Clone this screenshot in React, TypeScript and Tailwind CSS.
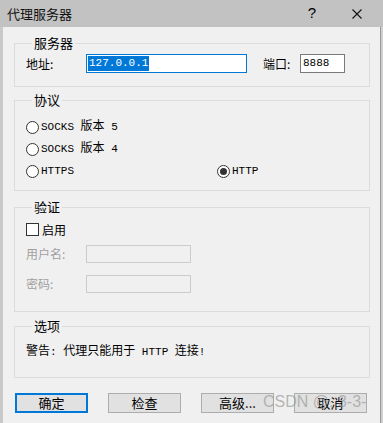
import React from "react";

const cjk = "font-['Noto_Sans_CJK_SC',sans-serif]";
const monoStack = "font-['Liberation_Mono','Noto_Sans_CJK_SC',monospace]";
const latin = "text-[11px]";

function Group({
  title,
  className,
  children,
}: {
  title: string;
  className: string;
  children: React.ReactNode;
}) {
  return (
    <fieldset
      className={`mx-[11px] mr-[10px] border border-[#dcdcdc] px-[11px] ${className}`}
    >
      <legend className="ml-[6px] px-[2px] text-[13px] leading-[14px] text-black">
        {title}
      </legend>
      {children}
    </fieldset>
  );
}

function Radio({ label, checked }: { label: React.ReactNode; checked?: boolean }) {
  return (
    <div className="flex h-[14px] items-center gap-[2px]">
      <span className="flex h-[13px] w-[13px] items-center justify-center rounded-full border border-[#333] bg-white">
        {checked && <span className="h-[7px] w-[7px] rounded-full bg-[#333]" />}
      </span>
      <span className={`${monoStack} whitespace-pre text-[12px] leading-[14px] text-black`}>{label}</span>
    </div>
  );
}

function Btn({ label, primary }: { label: string; primary?: boolean }) {
  return (
    <div
      className={`flex h-[20px] w-[73px] items-center justify-center bg-[#e1e1e1] text-[13px] text-black ${
        primary ? "border-2 border-[#0078d7]" : "border border-[#adadad]"
      }`}
    >
      {label}
    </div>
  );
}

export default function App() {
  return (
    <div className={`relative flex h-[423px] w-[383px] flex-col overflow-hidden bg-[#f0f0f0] ${cjk}`}>
      {/* title bar */}
      <div className="flex h-[27px] shrink-0 items-center bg-[#c2c2c2] pl-[7px] pr-[21px]">
        <span className="text-[13px] text-[#111]">代理服务器</span>
        <span className="ml-auto mr-[36px] font-['Liberation_Sans'] text-[15px] text-black">?</span>
        <svg width="10" height="10" viewBox="0 0 10 10">
          <path d="M0.5 0.5 L9.5 9.5 M9.5 0.5 L0.5 9.5" stroke="#111" strokeWidth="1.1" />
        </svg>
      </div>

      <div className="flex flex-1">
        <div className="w-[3px] bg-[#c9c9c9]" />
        <div className="flex flex-1 flex-col">
          {/* 服务器 */}
          <Group title="服务器" className="mt-[9px] h-[51px]">
            <div className="mt-[4px] flex h-[19px] items-center text-[12px]">
              <span className="w-[60px]">地址:</span>
              <div className="flex h-[19px] w-[161px] items-center border border-[#0078d7] bg-white pl-[1px]">
                <span className={`${monoStack} ${latin} bg-[#0078d7] px-[1px] leading-[15px] text-white`}>127.0.0.1</span>
              </div>
              <span className="ml-[16px] w-[37px]">端口:</span>
              <div className="flex h-[19px] w-[45px] items-center border border-[#7a7a7a] bg-white pl-[2px]">
                <span className={`${monoStack} ${latin} text-black`}>8888</span>
              </div>
            </div>
          </Group>

          {/* 协议 */}
          <Group title="协议" className="mt-[6px] h-[98px]">
            <div className="mt-[13px] grid grid-cols-[191px_1fr] gap-y-[8px]">
              <div className="col-span-2">
                <Radio label={<><span className={latin}>SOCKS </span>版本<span className={latin}> 5</span></>} />
              </div>
              <div className="col-span-2">
                <Radio label={<><span className={latin}>SOCKS </span>版本<span className={latin}> 4</span></>} />
              </div>
              <Radio label={<span className={latin}>HTTPS</span>} />
              <Radio label={<span className={latin}>HTTP</span>} checked />
            </div>
          </Group>

          {/* 验证 */}
          <Group title="验证" className="mt-[9px] h-[112px]">
            <div className="mt-[9px] flex h-[13px] items-center gap-[3px]">
              <span className="h-[13px] w-[13px] border border-[#333] bg-white" />
              <span className="text-[12px] text-black">启用</span>
            </div>
            <div className="mt-[9px] flex h-[18px] items-center text-[12px] text-[#a0a0a0]">
              <span className="w-[60px]">用户名:</span>
              <div className="h-[18px] w-[105px] border border-[#cccccc] bg-[#f0f0f0]" />
            </div>
            <div className="mt-[12px] flex h-[18px] items-center text-[12px] text-[#a0a0a0]">
              <span className="w-[60px]">密码:</span>
              <div className="h-[18px] w-[105px] border border-[#cccccc] bg-[#f0f0f0]" />
            </div>
          </Group>

          {/* 选项 */}
          <Group title="选项" className="mt-[7px] h-[59px]">
            <div className={`${monoStack} mt-[11px] whitespace-pre text-[12px] leading-[16px] text-black`}>
              警告<span className={latin}>: </span>代理只能用于<span className={latin}> HTTP </span>连接<span className={latin}>!</span>
            </div>
          </Group>

          <div className="mt-[15px] flex gap-[20px] pl-[12px]">
            <Btn label="确定" primary />
            <Btn label="检查" />
            <Btn label="高级..." />
            <Btn label="取消" />
          </div>
        </div>
        <div className="w-[3px] border-l border-[#9a9a9a] bg-[#d0d0d0]" />
      </div>

      {/* watermark */}
      <span className="absolute left-[263px] top-[390px] font-['Liberation_Sans'] text-[16px] text-[#9a9a9a]/70">
        CSDN @, 3-3-
      </span>
    </div>
  );
}
